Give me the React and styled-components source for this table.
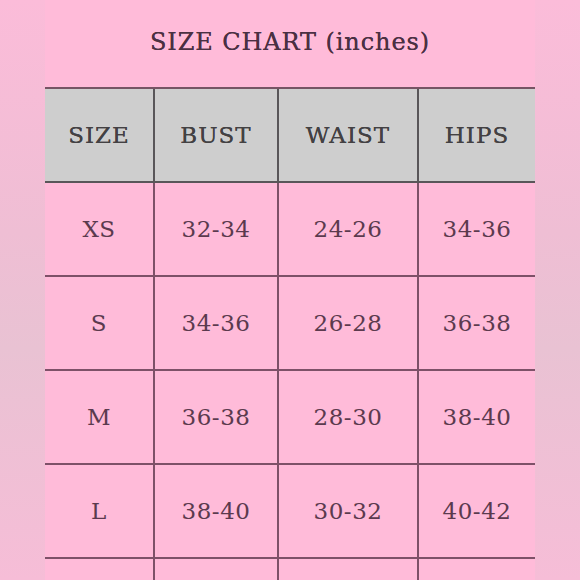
import styled, { createGlobalStyle } from "styled-components";

const GlobalStyle = createGlobalStyle`
  html, body {
    margin: 0;
    padding: 0;
    background: #ffbbd9;
  }
`;

const columns = ["SIZE", "BUST", "WAIST", "HIPS"];

const rows = [
  ["XS", "32-34", "24-26", "34-36"],
  ["S", "34-36", "26-28", "36-38"],
  ["M", "36-38", "28-30", "38-40"],
  ["L", "38-40", "30-32", "40-42"],
  ["", "", "", ""],
];

export default function App() {
  return (
    <>
      <GlobalStyle />
      <StyledPage>
        <StyledSide />
        <StyledPanel>
          <StyledTitle>SIZE CHART (inches)</StyledTitle>
          <StyledTable>
            {columns.map((name, i) => (
              <StyledHeadCell key={name} $first={i === 0}>
                {name}
              </StyledHeadCell>
            ))}
            {rows.map((row, r) =>
              row.map((value, i) => (
                <StyledCell key={`${r}-${i}`} $first={i === 0}>
                  {value}
                </StyledCell>
              ))
            )}
          </StyledTable>
        </StyledPanel>
        <StyledSide />
      </StyledPage>
    </>
  );
}

const StyledPage = styled.div`
  display: flex;
  width: 580px;
  height: 580px;
  overflow: hidden;
`;

const StyledSide = styled.div`
  width: 45px;
  flex-shrink: 0;
  background: linear-gradient(180deg, #fbbcd9 0%, #efbed4 40%, #e9c2d3 60%, #f6bdd7 100%);
`;

const StyledPanel = styled.div`
  width: 490px;
  background: #ffbbd9;
  display: flex;
  flex-direction: column;
`;

const StyledTitle = styled.h1`
  margin: 0;
  height: 87px;
  flex-shrink: 0;
  display: flex;
  align-items: center;
  justify-content: center;
  padding-bottom: 4px;
  box-sizing: border-box;
  font-family: "DejaVu Serif", "Liberation Serif", serif;
  font-size: 24px;
  font-weight: normal;
  letter-spacing: 0.9px;
  color: #4b3043;
  text-shadow: 0 0 0.6px #4b3043;
`;

const StyledTable = styled.div`
  display: grid;
  flex-shrink: 0;
  grid-template-columns: 108px 124px 140px 118px;
  grid-auto-rows: 94px;
  border-top: 2px solid rgba(60, 40, 50, 0.7);
`;

const StyledHeadCell = styled.div`
  display: flex;
  align-items: center;
  justify-content: center;
  background: #cecece;
  border-left: ${({ $first }) => ($first ? "none" : "2px solid rgba(50, 45, 50, 0.75)")};
  border-bottom: 2px solid rgba(50, 45, 50, 0.75);
  font-family: "DejaVu Serif", "Liberation Serif", serif;
  font-size: 23px;
  letter-spacing: 1px;
  color: #434143;
  text-shadow: 0 0 0.6px #434143;
`;

const StyledCell = styled.div`
  display: flex;
  align-items: center;
  justify-content: center;
  border-left: ${({ $first }) => ($first ? "none" : "2px solid rgba(70, 35, 55, 0.7)")};
  border-bottom: 2px solid rgba(70, 35, 55, 0.7);
  font-family: "DejaVu Serif", "Liberation Serif", serif;
  font-size: 23px;
  letter-spacing: 0.5px;
  color: #5b3a4e;
`;
